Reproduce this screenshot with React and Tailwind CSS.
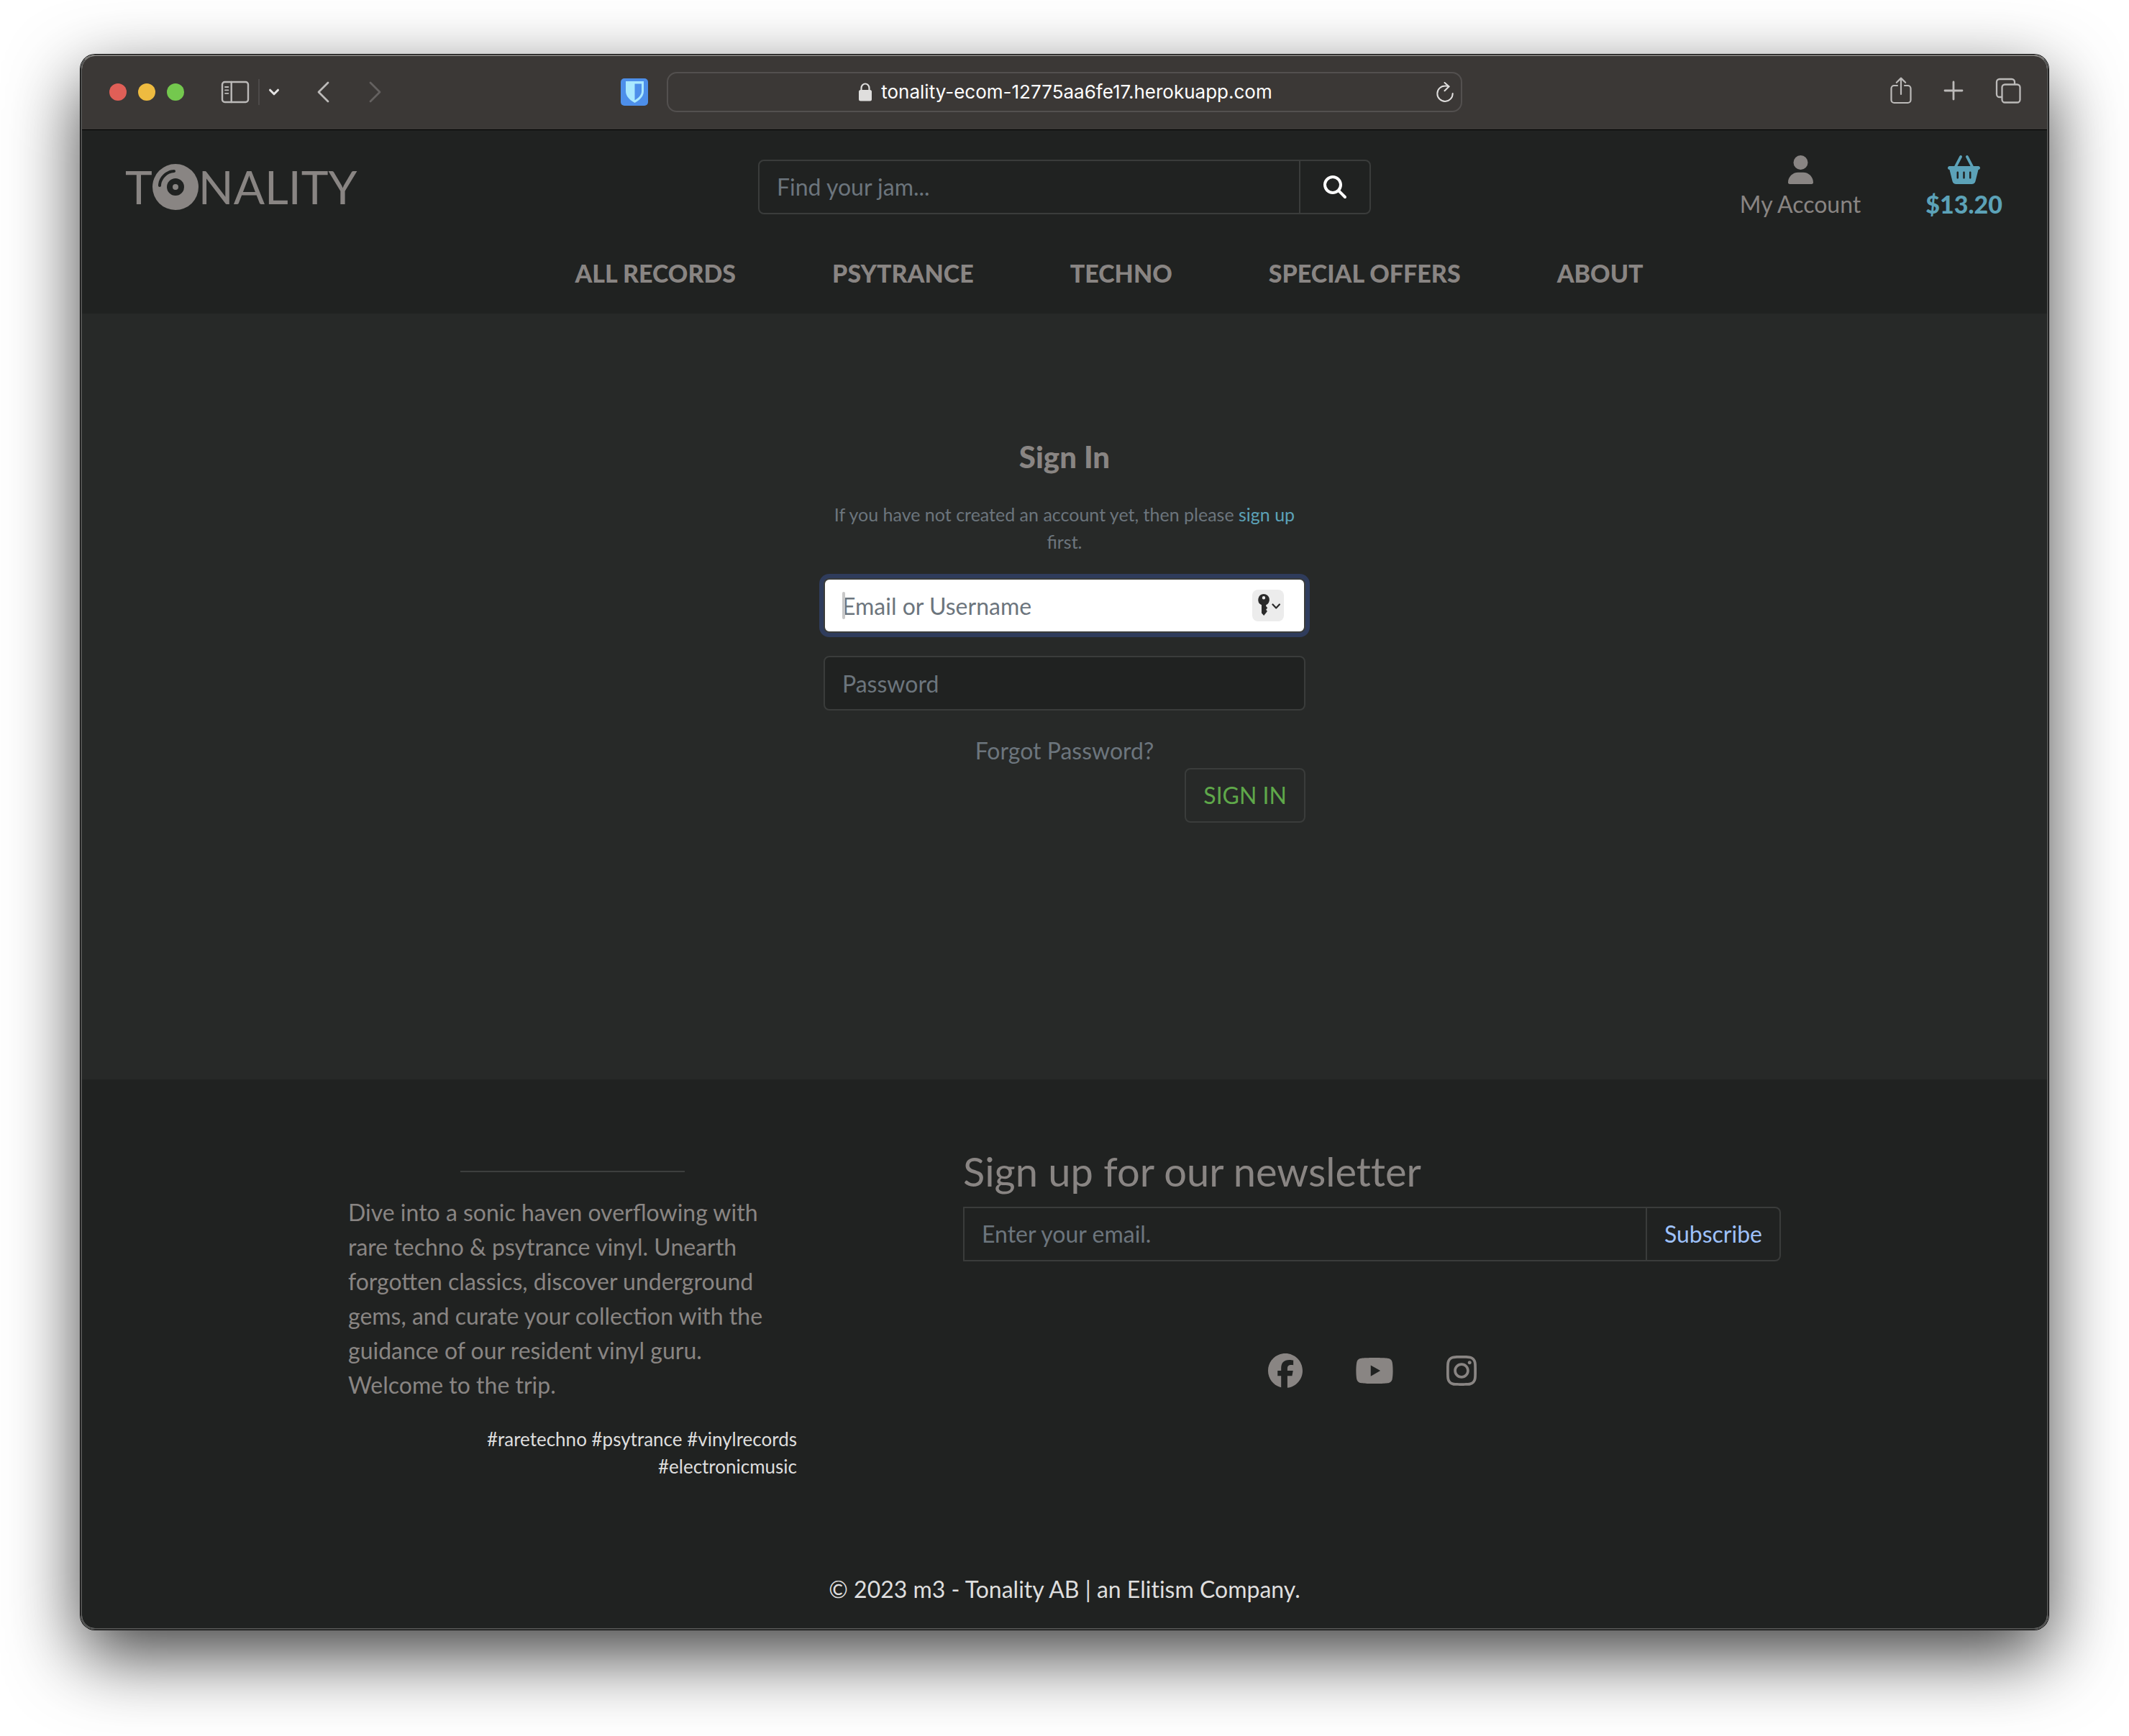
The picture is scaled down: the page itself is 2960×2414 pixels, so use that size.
import React from "react";
import {
  FaCompactDisc,
  FaMagnifyingGlass,
  FaUser,
  FaBasketShopping,
  FaFacebook,
  FaYoutube,
  FaInstagram,
} from "react-icons/fa6";

const NAV_LINKS = ["ALL RECORDS", "PSYTRANCE", "TECHNO", "SPECIAL OFFERS", "ABOUT"];

const SOCIAL_LINKS = [
  { name: "Facebook", Icon: FaFacebook, size: "h-12 w-12" },
  { name: "YouTube", Icon: FaYoutube, size: "h-12 w-[54px]" },
  { name: "Instagram", Icon: FaInstagram, size: "h-12 w-[42px]" },
];

function SidebarIcon() {
  return (
    <svg width="40" height="32" viewBox="0 0 40 32" fill="none" stroke="#bcbab9" strokeWidth="2.4" strokeLinecap="round">
      <rect x="2" y="2" width="36" height="28" rx="3.5" />
      <path d="M14.7 2v28" />
      <path d="M6 9h4.4M6 13.4h4.4M6 17.8h4.4" strokeWidth="1.8" />
    </svg>
  );
}

function ShareIcon() {
  return (
    <svg width="30" height="38" viewBox="0 0 30 38" fill="none" stroke="#bcbab9" strokeWidth="2.2" strokeLinecap="round" strokeLinejoin="round">
      <path d="M10 12H5.5A4 4 0 0 0 1.5 16v16a4 4 0 0 0 4 4h19a4 4 0 0 0 4-4V16a4 4 0 0 0-4-4H20" />
      <path d="M15 24V2M8.8 7.8 15 1.6l6.2 6.2" />
    </svg>
  );
}

function TabsIcon() {
  return (
    <svg width="36" height="36" viewBox="0 0 36 36" fill="none" stroke="#bcbab9" strokeWidth="2.3" strokeLinecap="round">
      <rect x="9.5" y="9.5" width="25" height="25" rx="4" />
      <path d="M9 27H6a4 4 0 0 1-4-4V6a4 4 0 0 1 4-4h17a4 4 0 0 1 4 4v3" />
    </svg>
  );
}

function BrowserToolbar() {
  return (
    <div className="grid h-[103px] grid-cols-[1fr_1106px_1fr] items-center border-b border-black bg-[#3b3836] pb-0.5">
      <div className="flex items-center pl-[38px] pr-[26px]">
        <div className="flex gap-4">
          <button aria-label="Close" className="size-6 rounded-full bg-[#e05f57]" />
          <button aria-label="Minimize" className="size-6 rounded-full bg-[#eebb40]" />
          <button aria-label="Zoom" className="size-6 rounded-full bg-[#74c84e]" />
        </div>
        <button aria-label="Show sidebar" className="ml-[51px]">
          <SidebarIcon />
        </button>
        <div className="ml-3 h-9 w-0.5 bg-[#4d4a49]" />
        <button aria-label="Tab groups" className="ml-3">
          <svg width="16" height="12" viewBox="0 0 16 12" fill="none" stroke="#e4e3e3" strokeWidth="3" strokeLinecap="round" strokeLinejoin="round">
            <path d="M2.5 3.2 8 8.8l5.5-5.6" />
          </svg>
        </button>
        <button aria-label="Back" className="ml-[51px]">
          <svg width="20" height="32" viewBox="0 0 20 32" fill="none" stroke="#bcbab9" strokeWidth="2.8" strokeLinecap="round" strokeLinejoin="round">
            <path d="M16 3 3 16l13 13" />
          </svg>
        </button>
        <button aria-label="Forward" className="ml-[51px]">
          <svg width="20" height="32" viewBox="0 0 20 32" fill="none" stroke="#646160" strokeWidth="2.8" strokeLinecap="round" strokeLinejoin="round">
            <path d="m4 3 13 13L4 29" />
          </svg>
        </button>
        <button aria-label="Password manager" className="ml-auto">
          <svg width="38" height="38" viewBox="0 0 38 38">
            <rect width="38" height="38" rx="5" fill="#4d8fea" />
            <path d="M7 4h25v14c0 7-6 12.500-12.500 16C13 30.500 7 25 7 18Z" fill="#a9e8ff" />
            <path d="M19.500 7.500H29V18c0 5.500-5 9.500-9.500 12.300Z" fill="#4d8fea" />
          </svg>
        </button>
      </div>
      <div className="flex h-14 items-center rounded-[14px] border-2 border-[#53504f] pl-9 pr-2.5">
        <div className="flex flex-1 items-center justify-center gap-3">
          <svg width="20" height="26" viewBox="0 0 20 26" fill="none">
            <rect x="1" y="10" width="18" height="15.500" rx="2.500" fill="#dfdedd" />
            <path d="M4.500 11V7.500a5.500 6 0 0 1 11 0V11" stroke="#dfdedd" strokeWidth="2.200" />
          </svg>
          <span className="font-['Inter',sans-serif] text-[26px] leading-8 text-white">tonality-ecom-12775aa6fe17.herokuapp.com</span>
        </div>
        <button aria-label="Reload">
          <svg width="24" height="28" viewBox="0 0 24 28" fill="none" stroke="#dfdedd" strokeWidth="2" strokeLinecap="round" strokeLinejoin="round">
            <path d="M17.500 6.300C15.800 5.600 14 5.300 12 5.500A10.700 10.700 0 1 0 22.700 16" />
            <path d="m11.500 1 6 5.300-6 6" />
          </svg>
        </button>
      </div>
      <div className="flex items-center justify-end gap-11 pr-9 pb-1">
        <button aria-label="Share"><ShareIcon /></button>
        <button aria-label="New tab">
          <svg width="28" height="28" viewBox="0 0 28 28" fill="none" stroke="#bcbab9" strokeWidth="2.8" strokeLinecap="round">
            <path d="M14 2v24M2 14h24" />
          </svg>
        </button>
        <button aria-label="Show all tabs"><TabsIcon /></button>
      </div>
    </div>
  );
}

function SiteHeader() {
  return (
    <header className="bg-[#202221] text-[#898583]">
      <div className="grid grid-cols-[1fr_852px_1fr] items-center pt-[31px]">
        <a href="#home" aria-label="TONALITY" className="flex items-center pl-[60px] text-[64px] leading-[80px]">
          <span>T</span>
          <FaCompactDisc className="size-16" />
          <span>NALITY</span>
        </a>
        <form className="flex h-[76px] rounded-lg border-2 border-[#3a3c3b]">
          <input
            type="search"
            aria-label="Find your jam"
            placeholder="Find your jam..."
            className="min-w-0 flex-1 bg-transparent px-6 outline-none placeholder:text-[#6c757d]"
          />
          <button aria-label="Search" className="flex w-[98px] items-center justify-center border-l-2 border-[#3a3c3b] text-white">
            <FaMagnifyingGlass className="size-8" />
          </button>
        </form>
        <div className="flex justify-end gap-[90px] pt-1 pr-[62px] text-center leading-[48px]">
          <a href="#account" className="flex flex-col items-center gap-1">
            <FaUser className="h-10 w-[35px]" />
            <span>My Account</span>
          </a>
          <a href="#bag" className="flex flex-col items-center gap-1 text-[#5ca2b8]">
            <FaBasketShopping className="h-10 w-[45px]" />
            <span className="text-[34px] leading-[48px] font-black">$13.20</span>
          </a>
        </div>
      </div>
      <nav className="flex justify-center gap-[134px] pt-12 pb-8 pl-[124px] text-[34px] leading-[48px] font-black">
        {NAV_LINKS.map((label) => (
          <a key={label} href="#shop">{label}</a>
        ))}
      </nav>
    </header>
  );
}

function SignInForm() {
  return (
    <main className="flex h-[1065px] flex-col items-center bg-[#272928] pt-[175px]">
      <form className="flex w-[670px] flex-col">
        <h1 className="text-center text-[42px] leading-[48px] font-black text-[#898583]">Sign In</h1>
        <p className="mt-[37px] text-center text-[25px] leading-[38px] text-[#6c757d]">
          If you have not created an account yet, then please{" "}
          <a href="#signup" className="text-[#5ca2b8]">sign up</a>
          <br />
          first.
        </p>
        <div className="relative mt-8">
          <input
            type="text"
            aria-label="Email or Username"
            placeholder="Email or Username"
            className="h-[76px] w-full rounded-lg border-2 border-[#3a3c3b] bg-white px-6 text-black ring-6 ring-[#2f3c5c] outline-none placeholder:text-[#6c757d]"
          />
          <span className="absolute top-[19px] left-[26px] h-[38px] w-1 rounded-sm bg-[#c8c8c8]" />
          <button type="button" aria-label="Fill saved password" className="absolute top-4 right-[30px] flex size-11 items-center justify-center rounded-lg bg-[#ececec]">
            <svg width="44" height="44" viewBox="0 0 44 44" fill="none">
              <path fillRule="evenodd" d="M16 6a8 8 0 0 1 3.200 15.300V23l2 2.300-2 2.400 1.700 2.300-1.700 2.200L16.200 36 13 32.500V21.300A8 8 0 0 1 16 6Zm0 3a2.200 2.200 0 1 0 0 4.400A2.200 2.200 0 0 0 16 9Z" fill="#2b2b2b" />
              <path d="m28.500 20.500 4.700 5 4.700-5" stroke="#2b2b2b" strokeWidth="2.200" strokeLinecap="round" strokeLinejoin="round" />
            </svg>
          </button>
        </div>
        <input
          type="password"
          aria-label="Password"
          placeholder="Password"
          className="mt-8 h-[76px] w-full rounded-lg border-2 border-[#3a3c3b] bg-[#202221] px-6 outline-none placeholder:text-[#6c757d]"
        />
        <a href="#reset" className="mt-8 self-center leading-[48px] text-[#6c757d]">Forgot Password?</a>
        <button className="h-[76px] self-end rounded-lg border-2 border-[#3a3c3b] px-6 text-[#5fa84a]">SIGN IN</button>
      </form>
    </main>
  );
}

function SiteFooter() {
  return (
    <footer className="flex flex-1 flex-col items-center bg-[#202221] text-[#898583]">
      <div className="flex w-[1992px] justify-between">
        <section className="w-[624px] pt-[127px]">
          <hr className="mx-auto w-1/2 border-t-2 border-[#3d3f3e]" />
          <p className="mt-8 pr-8 leading-[48px]">
            Dive into a sonic haven overflowing with rare techno &amp; psytrance vinyl. Unearth forgotten classics,
            discover underground gems, and curate your collection with the guidance of our resident vinyl guru.
            Welcome to the trip.
          </p>
          <p className="mt-8 ml-auto w-[560px] text-right text-[26px] leading-[38px] text-[#dedede]">
            #raretechno #psytrance #vinylrecords #electronicmusic
          </p>
        </section>
        <section className="w-[1137px] pt-[94px]">
          <h2 className="text-[56px] leading-[67px] [font-variant-ligatures:none]">Sign up for our newsletter</h2>
          <form className="mt-4 flex h-[76px] rounded-r-lg border-2 border-[#3a3c3b]">
            <input
              type="email"
              aria-label="Email"
              placeholder="Enter your email."
              className="min-w-0 flex-1 bg-transparent px-6 outline-none placeholder:text-[#6c757d]"
            />
            <button className="border-l-2 border-[#3a3c3b] px-6 text-[#9ec1fb]">Subscribe</button>
          </form>
          <div className="mt-32 flex justify-center gap-[73px]">
            {SOCIAL_LINKS.map(({ name, Icon, size }) => (
              <a key={name} href="#social" aria-label={name}>
                <Icon className={size} />
              </a>
            ))}
          </div>
        </section>
      </div>
      <p className="mt-auto mb-[30px] leading-[48px] text-[#dedede] [font-variant-ligatures:none]">
        © 2023 m3 - Tonality AB | an Elitism Company.
      </p>
    </footer>
  );
}

export default function App() {
  return (
    <div className="min-h-screen bg-white px-28 pt-[76px] pb-[148px] font-['Lato',sans-serif] text-[32px]">
      <div className="flex min-h-[2190px] flex-col overflow-hidden rounded-[20px] border-2 border-[#4f504f] border-t-[#7b7976] shadow-[0_0_0_1px_#000,0_36px_100px_rgba(0,0,0,0.75)]">
        <BrowserToolbar />
        <SiteHeader />
        <SignInForm />
        <SiteFooter />
      </div>
    </div>
  );
}
